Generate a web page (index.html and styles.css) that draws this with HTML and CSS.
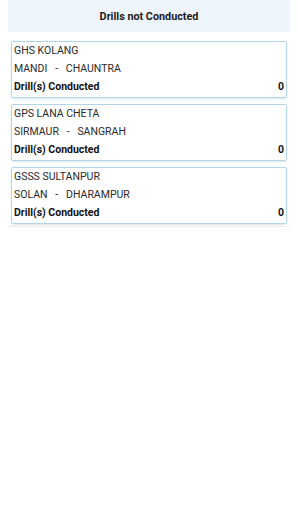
FILE: index.html
```html
<!DOCTYPE html>
<html lang="en">
<head>
  <meta charset="UTF-8">
  <meta name="viewport" content="width=device-width, initial-scale=1.0">
  <title>Drills not Conducted</title>
  <link rel="stylesheet" href="styles.css">
</head>
<body>
  <div class="page">
    <div class="heading">Drills not Conducted</div>

    <div class="list">
      <div class="card">
        <div class="row">GHS KOLANG</div>
        <div class="row">MANDI &nbsp; - &nbsp; CHAUNTRA</div>
        <div class="row count">
          <span>Drill(s) Conducted</span>
          <span>0</span>
        </div>
      </div>

      <div class="card">
        <div class="row">GPS LANA CHETA</div>
        <div class="row">SIRMAUR &nbsp; - &nbsp; SANGRAH</div>
        <div class="row count">
          <span>Drill(s) Conducted</span>
          <span>0</span>
        </div>
      </div>

      <div class="card">
        <div class="row">GSSS SULTANPUR</div>
        <div class="row">SOLAN &nbsp; - &nbsp; DHARAMPUR</div>
        <div class="row count">
          <span>Drill(s) Conducted</span>
          <span>0</span>
        </div>
      </div>
    </div>
  </div>
</body>
</html>
```

FILE: styles.css
```css
body {
  font-family: 'Roboto', 'Liberation Sans', sans-serif;
  background-color: white;
  margin: 0;
  color: #222;
}

.page {
  padding: 0 8px;
}

.heading {
  height: 32px;
  line-height: 34px;
  background-color: #eef5fc;
  text-align: center;
  font-size: 10.8px;
  font-weight: bold;
  color: #1a1a1a;
}

.list {
  padding: 9px 3px 2px;
  border-bottom: 1px solid #eef0f2;
  display: flex;
  flex-direction: column;
  gap: 6px;
}

.card {
  border: 1px solid #b3d6ea;
  border-radius: 2px;
  padding: 0 2px 1px;
  box-shadow: 0 1px 2px rgba(120, 150, 170, 0.25);
}

.row {
  height: 18px;
  line-height: 17px;
  font-size: 10.5px;
  color: #2a2a2a;
}

.count {
  display: flex;
  justify-content: space-between;
  font-weight: bold;
  color: #111;
}
```
